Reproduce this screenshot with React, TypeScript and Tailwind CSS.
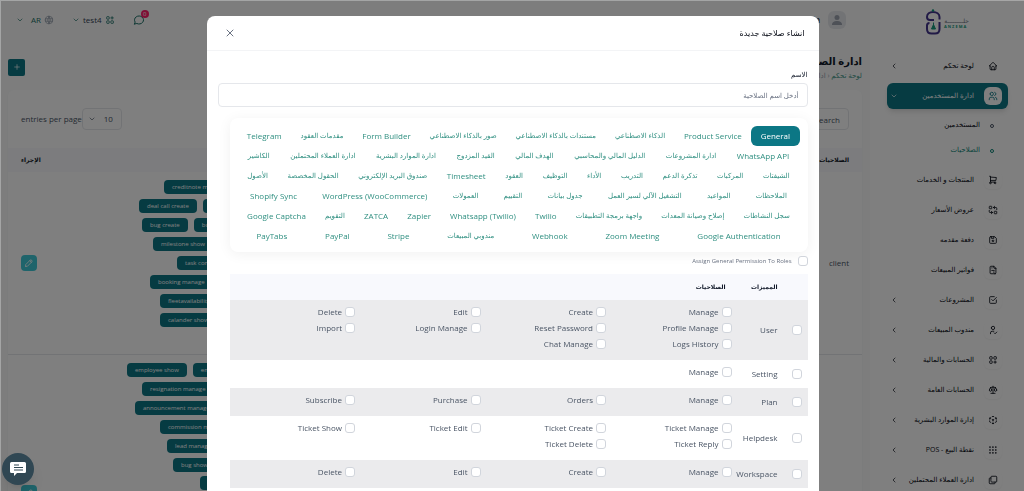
import { useState } from "react";
import type { ReactNode } from "react";
import {
    TbApps,
    TbBoxMultiple,
    TbCheckbox,
    TbChevronDown,
    TbChevronLeft,
    TbDeviceFloppy,
    TbFileInvoice,
    TbGridDots,
    TbHome,
    TbLayoutGridAdd,
    TbMessageCircle,
    TbPencil,
    TbPlus,
    TbReplace,
    TbScale,
    TbShoppingCart,
    TbUserCheck,
    TbUsers,
    TbWorld,
    TbX,
} from "react-icons/tb";

interface MenuItem {
    label: string;
    icon: (props: { className?: string }) => ReactNode;
    hasChildren?: boolean;
}

interface PermissionRow {
    module: string;
    permissions: string[];
}

interface RoleRow {
    name: string;
    height: string;
    // each line: distance from the column start, then its badges
    lines: { inset: number; badges: string[] }[];
}

function CubeIcon({ className }: { className?: string }) {
    return (
        <svg viewBox="0 0 24 24" className={className} fill="none" stroke="currentColor" strokeWidth="2" strokeLinecap="round" strokeLinejoin="round">
            <path d="M6 17.600l-2 -1.100v-2.500M4 10v-2.500l2 -1.100M10 4.100l2 -1.100l2 1.100M18 6.400l2 1.100v2.500M20 14v2.500l-2 1.120M14 19.900l-2 1.100l-2 -1.100M12 12l2 -1.100M18 8.600l2 -1.100M12 12v2.500M12 18.500v2.500M12 12l-2 -1.120M6 8.600l-2 -1.100" />
        </svg>
    );
}

const menuItems: MenuItem[] = [
    { label: "المنتجات و الخدمات", icon: TbShoppingCart },
    { label: "عروض الأسعار", icon: TbReplace },
    { label: "دفعة مقدمه", icon: TbDeviceFloppy },
    { label: "فواتير المبيعات", icon: TbFileInvoice },
    { label: "المشروعات", icon: TbCheckbox, hasChildren: true },
    { label: "مندوب المبيعات", icon: TbUserCheck, hasChildren: true },
    { label: "الحسابات والمالية", icon: TbLayoutGridAdd, hasChildren: true },
    { label: "الحسابات العامة", icon: TbScale, hasChildren: true },
    { label: "إدارة الموارد البشرية", icon: CubeIcon, hasChildren: true },
    { label: "نقطة البيع - POS", icon: TbGridDots, hasChildren: true },
    { label: "ادارة العملاء المحتملين", icon: TbBoxMultiple, hasChildren: true },
];

const tabRows: string[][] = [
    ["General", "Product Service", "الذكاء الاصطناعي", "مستندات بالذكاء الاصطناعي", "صور بالذكاء الاصطناعي", "Form Builder", "مقدمات العقود", "Telegram"],
    ["WhatsApp API", "ادارة المشروعات", "الدليل المالي والمحاسبي", "الهدف المالي", "القيد المزدوج", "ادارة الموارد البشرية", "ادارة العملاء المحتملين", "الكاشير"],
    ["الشيفتات", "المركبات", "تذكرة الدعم", "التدريب", "الأداء", "التوظيف", "العقود", "Timesheet", "صندوق البريد الإلكتروني", "الحقول المخصصة", "الأصول"],
    ["الملاحظات", "المواعيد", "التشغيل الآلي لسير العمل", "جدول بيانات", "التقييم", "العمولات", "WordPress (WooCommerce)", "Shopify Sync"],
    ["سجل النشاطات", "إصلاح وصيانة المعدات", "واجهة برمجة التطبيقات", "Twilio", "Whatsapp (Twilio)", "Zapier", "ZATCA", "التقويم", "Google Captcha"],
    ["Google Authentication", "Zoom Meeting", "Webhook", "مندوبي المبيعات", "Stripe", "PayPal", "PayTabs"],
];

const permissionRows: PermissionRow[] = [
    {
        module: "User",
        permissions: ["Manage", "Create", "Edit", "Delete", "Profile Manage", "Reset Password", "Login Manage", "Import", "Logs History", "Chat Manage"],
    },
    { module: "Setting", permissions: ["Manage"] },
    { module: "Plan", permissions: ["Manage", "Orders", "Purchase", "Subscribe"] },
    { module: "Helpdesk", permissions: ["Ticket Manage", "Ticket Create", "Ticket Edit", "Ticket Show", "Ticket Reply", "Ticket Delete"] },
    { module: "Workspace", permissions: ["Manage", "Create", "Edit", "Delete"] },
];

const roles: RoleRow[] = [
    {
        name: "client",
        height: "h-[182px]",
        lines: [
            { inset: 44, badges: ["creditnote manage"] },
            { inset: 19, badges: ["deal call create", "deal manage"] },
            { inset: 22, badges: ["bug create", "bug manage"] },
            { inset: 33, badges: ["milestone show", "milestone edit"] },
            { inset: 57, badges: ["task comment"] },
            { inset: 30, badges: ["booking manage"] },
            { inset: 40, badges: ["fleetavailability manage"] },
            { inset: 40, badges: ["calander show"] },
            { inset: 100, badges: ["user manage"] },
        ],
    },
    {
        name: "staff",
        height: "h-[276px]",
        lines: [
            { inset: 7, badges: ["employee show", "employee edit"] },
            { inset: 22, badges: ["resignation manage"] },
            { inset: 15, badges: ["announcement manage"] },
            { inset: 40, badges: ["commission manage"] },
            { inset: 47, badges: ["lead manage"] },
            { inset: 53, badges: ["bug show", "bug edit"] },
            { inset: 80, badges: ["deal show"] },
            { inset: 60, badges: ["deal edit"] },
            { inset: 60, badges: ["task show"] },
            { inset: 60, badges: ["task edit"] },
            { inset: 60, badges: ["pos show"] },
            { inset: 60, badges: ["pos manage"] },
            { inset: 60, badges: ["pos edit"] },
            { inset: 60, badges: ["user show"] },
        ],
    },
];

function Logo() {
    return (
        <svg viewBox="0 0 46 26" className="h-[26px] w-[46px]" fill="none" role="img" aria-label="ANZEMA">
            <path d="M9 11H5c-2 0-3-1-3-3 0-3 2.500-5 6-5s6.500 2 6.500 5v2.500" stroke="#43358c" strokeWidth="2" />
            <path d="M14.500 13v7c0 3-1.500 4.500-4.500 4.500H6.500C3.500 24.500 2 23 2 20v-3.500C2 15 3 14 4.500 14" stroke="#43358c" strokeWidth="2" />
            <circle cx="8" cy="1.500" r="1.200" fill="#159a7c" />
            <path d="M8.500 13.500v3.500" stroke="#159a7c" />
            <path d="M8.500 15.500l2 4.500h-4z" fill="#159a7c" stroke="#159a7c" strokeLinejoin="round" />
            <text x="44" y="14" fontSize="6" fill="#6b7280" fontFamily="DejaVu Sans" direction="rtl">حلـــــــــة</text>
            <text x="19" y="19" fontSize="4" fontWeight="700" fill="#159a7c" fontFamily="Open Sans" direction="ltr">A N Z E M A</text>
        </svg>
    );
}

function Sidebar() {
    return (
        <aside className="w-[154px] shrink-0 bg-white pr-4 pl-[17px]">
            <div className="flex h-[53px] justify-center pt-[9px]">
                <Logo />
            </div>
            <nav className="flex flex-col gap-1 text-[7px] text-gray-950">
                <a href="#dashboard" className="flex h-[26px] items-center gap-2.5 pr-1.5 pl-[3px]">
                    <span className="flex size-[18px] items-center justify-center rounded-md">
                        <TbHome className="size-[10px]" />
                    </span>
                    <span className="grow">لوحة تحكم</span>
                    <TbChevronLeft className="size-2" />
                </a>
                <a href="#users" className="flex h-[26px] items-center gap-2.5 rounded-md bg-[#0c7785] pr-1.5 pl-[3px] text-white shadow-md">
                    <span className="flex size-[18px] shrink-0 items-center justify-center rounded-md bg-white text-[#0c7785]">
                        <TbUsers className="size-[10px]" />
                    </span>
                    <span className="grow whitespace-nowrap">ادارة المستخدمين</span>
                    <TbChevronDown className="size-2" />
                </a>
                <div className="flex flex-col pr-[14px]">
                    <a href="#members" className="flex h-[25px] items-center gap-2.5">
                        <span className="size-1 rounded-full border border-gray-600" />
                        المستخدمين
                    </a>
                    <a href="#roles" className="flex h-[25px] items-center gap-2.5 text-[#0c8577]">
                        <span className="size-1 rounded-full border border-[#0c8577]" />
                        الصلاحيات
                    </a>
                </div>
                {menuItems.map(({ label, icon: Icon, hasChildren }) => (
                    <a key={label} href="#menu" className="flex h-[26px] shrink-0 items-center gap-2.5 pr-1.5 pl-[3px]">
                        <span className="flex size-[18px] items-center justify-center rounded-md bg-white shadow-xs">
                            <Icon className="size-[10px]" />
                        </span>
                        <span className="grow whitespace-nowrap">{label}</span>
                        {hasChildren && <TbChevronLeft className="size-2 shrink-0" />}
                    </a>
                ))}
            </nav>
        </aside>
    );
}

function Header() {
    return (
        <header className="flex h-10 items-center justify-between pr-6 pl-4 text-[8px] text-[#1b6f66]">
            <div className="flex items-center gap-2 text-gray-800">
                <span className="flex size-[18px] items-end justify-center rounded-md bg-gray-200">
                    <svg viewBox="0 0 18 18" className="size-[18px]" fill="#9ca3af">
                        <circle cx="9" cy="6.500" r="2.500" />
                        <path d="M4 14c0-3 2-4 5-4s5 1 5 4z" />
                    </svg>
                </span>
                <span className="font-semibold">admin</span>
            </div>
            <div className="flex items-center gap-[18px]">
                <button type="button" className="relative" aria-label="messages">
                    <TbMessageCircle className="size-3" />
                    <span className="absolute -top-1 -right-1 flex size-2 items-center justify-center rounded-full bg-[#ff1f6b] text-[6px] text-white">0</span>
                </button>
                <button type="button" className="flex items-center gap-[3px]">
                    <TbApps className="size-[10px]" />
                    <span className="text-gray-700">test4</span>
                    <TbChevronDown className="size-2" />
                </button>
                <button type="button" className="flex items-center gap-[3px]">
                    <TbWorld className="size-[10px] text-gray-400" />
                    <span>AR</span>
                    <TbChevronDown className="mr-1 size-2" />
                </button>
            </div>
        </header>
    );
}

function RolesPage() {
    return (
        <main className="min-w-0 grow bg-[#fafbfb]">
            <Header />
            <div className="flex items-center justify-between pt-3 pr-2 pl-2">
                <div>
                    <h1 className="text-[10px] leading-[18px] font-semibold text-gray-900">ادارة الصلاحيات</h1>
                    <p className="text-[7px] leading-3 text-gray-400">
                        <a href="#dashboard" className="text-[#3d9688]">لوحة تحكم</a> ‹ ادارة الصلاحيات
                    </p>
                </div>
                <button type="button" className="flex size-[17px] items-center justify-center rounded-xs bg-[#0c7785] text-white" aria-label="add">
                    <TbPlus className="size-2" />
                </button>
            </div>
            <section className="mt-2 mr-2 ml-2 rounded-md bg-white shadow-xs">
                <div className="flex h-[58px] items-center justify-between px-[13px] text-[8px] text-gray-600">
                    <input aria-label="Search" placeholder="Search" dir="ltr" className="h-[22px] w-16 rounded-sm border border-gray-200 px-2 text-right placeholder:text-gray-600" />
                    <label className="flex items-center">
                        <span className="relative flex items-center">
                            <select className="h-[22px] w-10 appearance-none rounded-sm border border-gray-200 pr-2">
                                <option>10</option>
                            </select>
                            <TbChevronDown className="pointer-events-none absolute left-1.5 size-2" />
                        </span>
                        <span>entries per page</span>
                    </label>
                </div>
                <table className="w-full table-fixed text-right text-[8px] text-gray-600">
                    <thead>
                        <tr className="h-6 bg-[#f8f9fd] text-[6px] text-gray-900">
                            <th className="w-[90px] pr-[13px]">الصلاحيات</th>
                            <th />
                            <th className="w-28 pl-[13px] text-left">الإجراء</th>
                        </tr>
                    </thead>
                    <tbody>
                        {roles.map((role) => (
                            <tr key={role.name} className="border-b border-gray-200">
                                <td className="pr-[13px]">{role.name}</td>
                                <td>
                                    <div dir="ltr" className={`flex flex-col justify-around py-1.5 ${role.height}`}>
                                        {role.lines.map((line) => (
                                            <div key={line.badges[0]} className="flex gap-1.5" style={{ paddingLeft: line.inset }}>
                                                {line.badges.map((badge) => (
                                                    <span key={badge} className="h-[14px] rounded-sm bg-[#0c7785] px-2 text-[6px] leading-[14px] font-medium whitespace-nowrap text-white">
                                                        {badge}
                                                    </span>
                                                ))}
                                            </div>
                                        ))}
                                    </div>
                                </td>
                                <td className="pl-[13px]">
                                    <button type="button" className="mr-auto flex size-4 items-center justify-center rounded-sm bg-[#3ec9d6] text-white" aria-label="edit">
                                        <TbPencil className="size-2.5" />
                                    </button>
                                </td>
                            </tr>
                        ))}
                    </tbody>
                </table>
            </section>
        </main>
    );
}

const checkboxClass = "size-[10px] shrink-0 appearance-none rounded-[3px] border border-gray-300 bg-white checked:border-[#0c7785] checked:bg-[#0c7785]";

function PermissionsTable() {
    return (
        <table className="w-full table-fixed text-right text-[8px] text-gray-600">
            <thead>
                <tr className="h-[26px] bg-[#f8f9fd] text-[6px] text-gray-900">
                    <th className="w-6" />
                    <th className="w-[52px] pr-1.5">المميزات</th>
                    <th className="pr-1.5">الصلاحيات</th>
                </tr>
            </thead>
            <tbody>
                {permissionRows.map((row) => (
                    <tr key={row.module} className="odd:bg-[#ebebed]">
                        <td className="pr-1.5">
                            <input id={row.module} type="checkbox" className={`${checkboxClass} block`} />
                        </td>
                        <td className="pr-1.5">
                            <label htmlFor={row.module}>{row.module}</label>
                        </td>
                        <td className="pt-1 pb-2">
                            <div className="grid grid-cols-4">
                                {row.permissions.map((permission) => (
                                    <label key={permission} className="flex h-4 items-center gap-[3px] whitespace-nowrap">
                                        <input type="checkbox" className={checkboxClass} />
                                        {permission}
                                    </label>
                                ))}
                            </div>
                        </td>
                    </tr>
                ))}
            </tbody>
        </table>
    );
}

function TabButton({ label, active, onClick }: { label: string; active: boolean; onClick: () => void }) {
    // the arabic face runs larger than the latin one at the same size
    const size = /^[A-Z]/.test(label) ? "text-[8px]" : "text-[7px]";
    const color = active ? "rounded-md bg-[#0c7785] font-medium text-white" : "text-[#2f8f80]";

    return (
        <button type="button" dir="auto" onClick={onClick} className={`h-5 flex-auto whitespace-nowrap ${size} ${color}`}>
            {label}
        </button>
    );
}

function CreateRoleModal({ onClose }: { onClose: () => void }) {
    const [activeTab, setActiveTab] = useState("General");

    return (
        <div className="fixed inset-0 overflow-hidden border-t border-l border-white/30 bg-black/50">
            <div role="dialog" aria-labelledby="modal-title" className="mx-auto mt-[15px] min-h-screen max-w-[612px] rounded-t-lg bg-white">
                <div className="flex h-[35px] items-center justify-between border-b border-gray-100 pr-[14px] pl-[17px]">
                    <h2 id="modal-title" className="text-[8px] text-gray-950">انشاء صلاحية جديدة</h2>
                    <button type="button" onClick={onClose} aria-label="close" className="text-gray-500">
                        <TbX className="size-3" />
                    </button>
                </div>
                <div className="px-[11px] pt-4">
                    <label htmlFor="role-name" className="block text-[7px] leading-4 text-gray-900">الاسم</label>
                    <input
                        id="role-name"
                        placeholder="أدخل اسم الصلاحية"
                        className="block h-6 w-full rounded-sm border border-gray-200 px-2 text-[7px] placeholder:text-gray-500"
                    />
                    <div className="mt-[11px] pl-3">
                        <div className="rounded-lg bg-white px-2 pt-2 pb-1.5 shadow-[0_2px_14px_rgba(0,0,0,0.06)]">
                            {tabRows.map((tabs) => (
                                <div key={tabs[0]} className="flex h-5">
                                    {tabs.map((tab) => (
                                        <TabButton key={tab} label={tab} active={tab === activeTab} onClick={() => setActiveTab(tab)} />
                                    ))}
                                </div>
                            ))}
                        </div>
                        <label className="flex h-[22px] items-start gap-1.5 pt-1 text-[6px] leading-[10px] text-gray-500">
                            <input type="checkbox" className={checkboxClass} />
                            Assign General Permission To Roles
                        </label>
                        <PermissionsTable />
                    </div>
                </div>
            </div>
        </div>
    );
}

export default function App() {
    const [isModalOpen, setIsModalOpen] = useState(true);

    return (
        <div dir="rtl" className="h-screen overflow-hidden bg-white font-['Open_Sans','DejaVu_Sans',sans-serif]">
            <div className="flex min-h-screen">
                <Sidebar />
                <RolesPage />
            </div>
            {isModalOpen && <CreateRoleModal onClose={() => setIsModalOpen(false)} />}
            <button type="button" aria-label="chat" className="fixed bottom-1.5 left-0.5 flex size-8 items-center justify-center rounded-full bg-[#304753] shadow-lg">
                <svg viewBox="0 0 16 14" className="h-[14px] w-4">
                    <path d="M1.500 0h13A1.500 1.500 0 0 1 16 1.500v8a1.500 1.500 0 0 1-1.500 1.500H7l-3 3v-3H1.500A1.500 1.500 0 0 1 0 9.500v-8A1.500 1.500 0 0 1 1.500 0z" fill="#fff" />
                    <path d="M4 3h5M4 5.500h9M4 8h9" stroke="#304753" />
                </svg>
            </button>
        </div>
    );
}
